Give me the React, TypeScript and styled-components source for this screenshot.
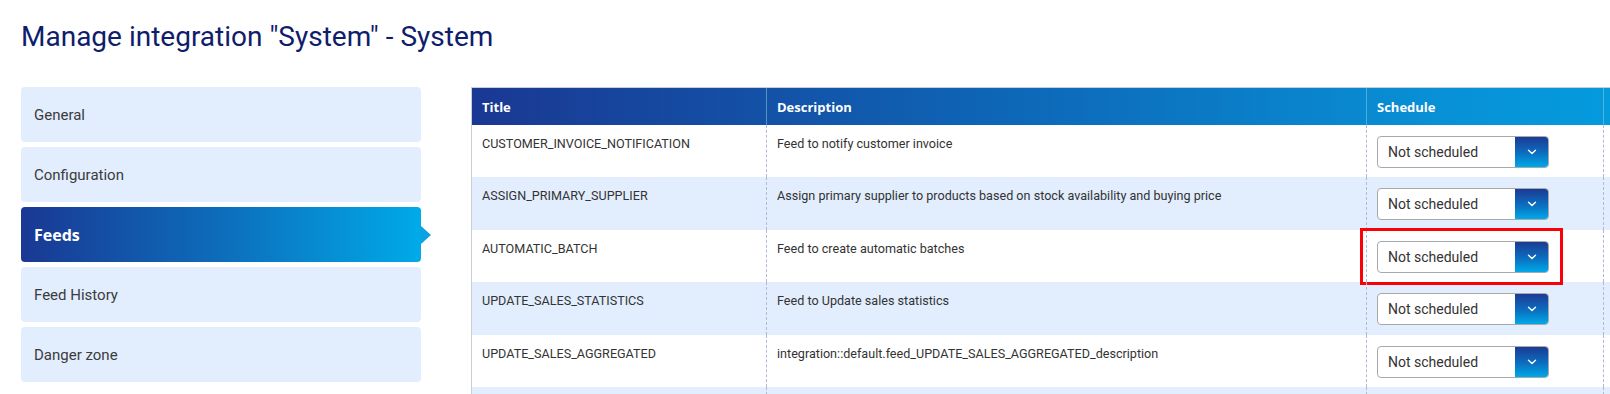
import React from "react";
import styled, { createGlobalStyle, css } from "styled-components";

const GlobalStyle = createGlobalStyle`
  html, body {
    margin: 0;
    padding: 0;
    background: #ffffff;
    overflow: hidden;
  }
  body {
    font-family: Roboto, "Liberation Sans", sans-serif;
    color: #333;
  }
`;

const Page = styled.div`
  padding: 20px 0 0 21px;
  width: 1589px;
`;

const Heading = styled.h1`
  margin: 0 0 34px;
  font-size: 28px;
  line-height: 33px;
  font-weight: 400;
  color: #0f1d6b;
`;

const Layout = styled.div`
  display: flex;
  align-items: flex-start;
  gap: 50px;
`;

const Sidebar = styled.nav`
  width: 400px;
  flex: none;
  display: flex;
  flex-direction: column;
  gap: 5px;
`;

const NavItem = styled.div<{ $active?: boolean }>`
  position: relative;
  height: 55px;
  display: flex;
  align-items: center;
  padding-left: 13px;
  border-radius: 4px;
  background: #e2eefe;
  font-size: 15px;
  color: #3b3b3b;

  ${(p) =>
    p.$active &&
    css`
      background: linear-gradient(90deg, #1a3893 0%, #0d6dbb 50%, #00aae8 100%);
      color: #fff;
      font-family: "Open Sans", Lato, sans-serif;
      font-weight: 700;
      font-size: 16px;

      &::after {
        content: "";
        position: absolute;
        right: -10px;
        top: 50%;
        margin-top: -9px;
        border-left: 10px solid #0aa2e2;
        border-top: 9px solid transparent;
        border-bottom: 9px solid transparent;
      }
    `}
`;

const Main = styled.div`
  flex: 1;
  min-width: 0;
  overflow: hidden;
`;

const Grid = styled.div`
  width: 1300px;
  border-top: 1px solid #c9cfd8;
  border-left: 1px solid #c9cfd8;
`;

const cols = css`
  display: grid;
  grid-template-columns: 294px 600px 237px 1fr;
`;

const HeadRow = styled.div`
  ${cols};
  height: 37px;
  background: linear-gradient(90deg, #1a3893 0%, #0e65b6 40%, #0891d6 75%, #00a4e4 100%);
`;

const HeadCell = styled.div`
  display: flex;
  align-items: center;
  padding-left: 10px;
  font-family: "Open Sans", Lato, sans-serif;
  font-weight: 700;
  font-size: 13px;
  color: #fff;
  & + & {
    border-left: 1px solid rgba(140, 200, 210, 0.55);
  }
`;

const Row = styled.div<{ $alt?: boolean }>`
  ${cols};
  height: 52.4px;
  background: ${(p) => (p.$alt ? "#e2eefe" : "#ffffff")};
`;

const Cell = styled.div`
  position: relative;
  padding: 11px 10px 0;
  font-size: 12.6px;
  line-height: 16px;
  color: #333;
  & + & {
    border-left: 1px dashed #aebbd0;
  }
`;

const SelectCell = styled(Cell)`
  padding: 11px 0 0 10px;
`;

const Select = styled.div`
  width: 172px;
  height: 32px;
  box-sizing: border-box;
  display: flex;
  border: 1px solid #a9a9a9;
  border-radius: 4px;
  background: #fff;
  overflow: hidden;
`;

const SelectValue = styled.div`
  flex: 1;
  display: flex;
  align-items: center;
  padding-left: 10px;
  font-size: 14px;
  color: #333;
`;

const SelectButton = styled.div`
  width: 33px;
  display: flex;
  align-items: center;
  justify-content: center;
  background: linear-gradient(180deg, #1b3b94 0%, #0b6fc0 55%, #00a9e8 100%);
`;

const Highlight = styled.div`
  position: absolute;
  left: -7px;
  top: -2px;
  width: 203px;
  height: 57px;
  box-sizing: border-box;
  border: 3px solid #fb0007;
  pointer-events: none;
`;

const Chevron = () => (
  <svg width="10" height="6" viewBox="0 0 10 6" fill="none">
    <path d="M1.5 1.2 L5 4.6 L8.5 1.2" stroke="#fff" strokeWidth="1.4" strokeLinecap="round" strokeLinejoin="round" />
  </svg>
);

const navItems = ["General", "Configuration", "Feeds", "Feed History", "Danger zone"];

const feeds = [
  { title: "CUSTOMER_INVOICE_NOTIFICATION", description: "Feed to notify customer invoice" },
  {
    title: "ASSIGN_PRIMARY_SUPPLIER",
    description: "Assign primary supplier to products based on stock availability and buying price",
  },
  { title: "AUTOMATIC_BATCH", description: "Feed to create automatic batches", highlight: true },
  { title: "UPDATE_SALES_STATISTICS", description: "Feed to Update sales statistics" },
  {
    title: "UPDATE_SALES_AGGREGATED",
    description: "integration::default.feed_UPDATE_SALES_AGGREGATED_description",
  },
  { title: "", description: "" },
];

export default function App() {
  return (
    <>
      <GlobalStyle />
      <Page>
        <Heading>Manage integration "System" - System</Heading>
        <Layout>
          <Sidebar>
            {navItems.map((item) => (
              <NavItem key={item} $active={item === "Feeds"}>
                {item}
              </NavItem>
            ))}
          </Sidebar>
          <Main>
            <Grid>
              <HeadRow>
                <HeadCell>Title</HeadCell>
                <HeadCell>Description</HeadCell>
                <HeadCell>Schedule</HeadCell>
                <HeadCell />
              </HeadRow>
              {feeds.map((feed, i) => (
                <Row key={i} $alt={i % 2 === 1}>
                  <Cell>{feed.title}</Cell>
                  <Cell>{feed.description}</Cell>
                  <SelectCell>
                    {feed.title && (
                      <Select>
                        <SelectValue>Not scheduled</SelectValue>
                        <SelectButton>
                          <Chevron />
                        </SelectButton>
                      </Select>
                    )}
                    {feed.highlight && <Highlight />}
                  </SelectCell>
                  <Cell />
                </Row>
              ))}
            </Grid>
          </Main>
        </Layout>
      </Page>
    </>
  );
}
